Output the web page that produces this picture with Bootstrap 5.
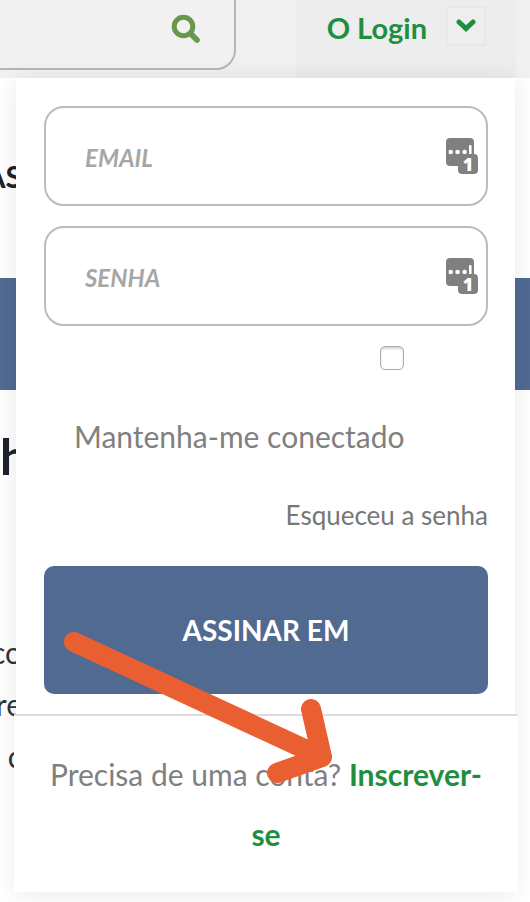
<!DOCTYPE html>
<html lang="pt-BR">
<head>
<meta charset="utf-8">
<meta name="viewport" content="width=device-width, initial-scale=1">
<title>Login</title>
<link href="https://cdn.jsdelivr.net/npm/bootstrap@5.3.0/dist/css/bootstrap.min.css" rel="stylesheet">
<style>
  body { font-family: Lato, "Open Sans", sans-serif; color: #1e222b; overflow-x: hidden; background: #fff; }
  .topbar { height: 78px; background: #f1f1f1; }
  .search-box { height: 100px; margin-top: -30px; border: 2px solid #b5b5b5; border-radius: 20px; flex: 0 0 266px; margin-left: -30px; padding: 18px 32px 0 0; }
  .search-box input { min-width: 0; width: 100%; }
  .login-area { flex: 1 1 0; margin-left: 60px; margin-right: 14px; padding: 6px 30px 0 0; gap: 19px; background: #ededed; }
  .login-link, .signup-link { color: #1f8e3f; font-weight: 700; text-decoration: none; }
  .login-link { font-size: 29px; line-height: 44px; }
  .toggle-btn { width: 40px; height: 40px; border: 2px solid #e8e8e8; background: #eee; }
  .search-box, .login-area { min-width: 0; }
  .login-panel { position: absolute; top: 78px; left: 16px; right: 15px; z-index: 10; background: #fff; box-shadow: 0 2px 24px rgba(0,0,0,.09); }
  .login-form { padding: 28px 27px 20px 28px; }
  .field { height: 100px; padding: 2px 60px 0 39px; border: 2px solid #bbb; border-radius: 20px; font-size: 24px; font-weight: 700; font-style: italic; }
  .field::placeholder { color: #a6a6a6; opacity: 1; }
  .key-btn { position: absolute; top: 32px; right: 10px; }
  .keep-check { width: 24px; height: 24px; margin: 0 84px 0 0; border: 1px solid #aaa; border-radius: 5px !important; box-shadow: inset 0 2px 2px rgba(0,0,0,.16); }
  .keep-label { padding-left: 30px; margin-top: 36px; font-size: 30px; line-height: 60px; color: #808080; }
  .forgot { margin-top: 31px; font-size: 26px; line-height: 36px; color: #777; text-decoration: none; }
  .submit-btn { height: 128px; margin-top: 33px; border-radius: 10px; background: #506a92; color: #fff; font-size: 28px; font-weight: 700; }
  .submit-btn:hover { background: #45608a; color: #fff; }
  .signup { margin: 0 -3px 0 -2px; padding: 28px 30px; border-top: 2px solid #ddd; background: #fff; font-size: 30px; line-height: 60px; color: #808080; }
  .arrow { position: absolute; left: 44px; bottom: 104px; pointer-events: none; }
  .page-copy { width: 22px; direction: rtl; white-space: nowrap; }
  .section-name { padding-top: 78px; height: 200px; font-size: 30px; line-height: 40px; font-weight: 700; }
  .band { height: 112px; background: #506a92; }
  .page-title { padding: 34px 0 0 0; margin: 0; height: 236px; font-size: 49px; line-height: 64px; font-weight: 700; }
  .page-text { font-size: 30px; line-height: 52px; color: #333; }
</style>
</head>
<body>
<header class="topbar d-flex align-items-stretch overflow-hidden">
  <form class="search-box d-flex align-items-center">
    <input type="search" class="flex-fill border-0 bg-transparent" aria-label="Buscar">
    <button type="button" class="btn p-0 border-0 d-flex" aria-label="Buscar">
      <svg width="32" height="32" viewBox="0 0 32 32" fill="none" stroke="#68984a" stroke-linecap="round"><circle cx="13.500" cy="13.500" r="9.300" stroke-width="5"/><path d="M21 21l6 6" stroke-width="5.600"/></svg>
    </button>
  </form>
  <div class="login-area d-flex justify-content-end align-items-start">
    <a href="#" class="login-link">O Login</a>
    <button type="button" class="toggle-btn p-0 d-flex align-items-center justify-content-center" aria-label="Abrir login" aria-expanded="true">
      <svg width="20" height="14" viewBox="0 0 20 14" fill="none" stroke="#1f8e3f" stroke-width="5"><path d="M3 3l7 6.500L17 3" stroke-linecap="round"/></svg>
    </button>
  </div>
</header>

<section class="login-panel" aria-label="Login">
  <form class="login-form d-flex flex-column">
    <div class="position-relative mb-3 pb-1">
      <input type="email" class="form-control field" placeholder="EMAIL" aria-label="Email">
      <button type="button" class="key-btn btn p-0 border-0 d-flex" aria-label="Preencher email">
        <svg width="32" height="36" viewBox="0 0 32 36"><rect width="28" height="28" rx="4" fill="#808080"/><g fill="#fff"><circle cx="4.700" cy="14" r="2.300"/><circle cx="11.600" cy="14" r="2.300"/><circle cx="18.600" cy="14" r="2.300"/><rect x="23" y="7" width="2.600" height="10" rx="1"/></g><rect x="12" y="16" width="20" height="20" rx="4" fill="#808080"/><text x="22" y="33" text-anchor="middle" font-family="Open Sans, sans-serif" font-weight="800" font-size="18" fill="#fff">1</text></svg>
      </button>
    </div>
    <div class="position-relative mb-3 pb-1">
      <input type="password" class="form-control field" placeholder="SENHA" aria-label="Senha">
      <button type="button" class="key-btn btn p-0 border-0 d-flex" aria-label="Preencher senha">
        <svg width="32" height="36" viewBox="0 0 32 36"><rect width="28" height="28" rx="4" fill="#808080"/><g fill="#fff"><circle cx="4.700" cy="14" r="2.300"/><circle cx="11.600" cy="14" r="2.300"/><circle cx="18.600" cy="14" r="2.300"/><rect x="23" y="7" width="2.600" height="10" rx="1"/></g><rect x="12" y="16" width="20" height="20" rx="4" fill="#808080"/><text x="22" y="33" text-anchor="middle" font-family="Open Sans, sans-serif" font-weight="800" font-size="18" fill="#fff">1</text></svg>
      </button>
    </div>
    <input type="checkbox" id="keep" class="form-check-input keep-check align-self-end">
    <label for="keep" class="keep-label">Mantenha-me conectado</label>
    <a href="#" class="forgot align-self-end">Esqueceu a senha</a>
    <button type="button" class="btn submit-btn border-0">ASSINAR EM</button>
  </form>
  <div class="signup text-center">Precisa de uma conta? <a href="#" class="signup-link">Inscrever-se</a></div>
  <svg class="arrow" width="276" height="160" viewBox="60 628 276 160" fill="none" stroke="#e95f31" stroke-width="20" stroke-linecap="round" stroke-linejoin="round" aria-hidden="true"><path d="M74 642L322 757M311 709L322 757L277 773"/></svg>
</section>

<main>
  <div class="page-copy section-name">AS</div>
  <div class="band"></div>
  <h1 class="page-title">h</h1>
  <p class="page-copy page-text mb-0">co<br>re<br>c</p>
</main>
<script src="https://cdn.jsdelivr.net/npm/bootstrap@5.3.0/dist/js/bootstrap.bundle.min.js"></script>
</body>
</html>
